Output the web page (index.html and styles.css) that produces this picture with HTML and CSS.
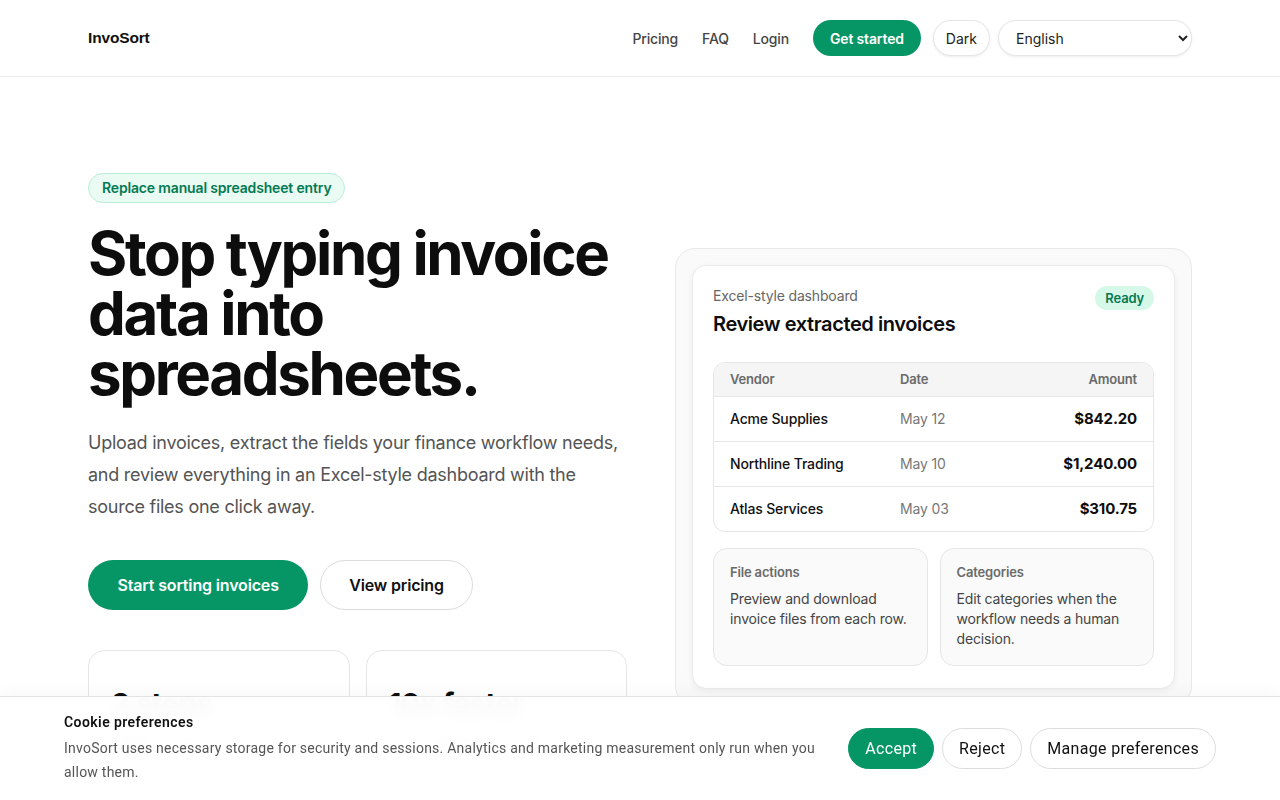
FILE: index.html
```html
<!DOCTYPE html>
<html lang="en">
<head>
    <meta charset="UTF-8">
    <meta name="viewport" content="width=device-width, initial-scale=1.0">
    <title>InvoSort</title>
    <link rel="stylesheet" href="styles.css">
</head>
<body>
    <header class="site-header">
        <div class="container header-inner">
            <a class="logo" href="#">InvoSort</a>
            <nav class="nav">
                <a href="#" class="nav-link">Pricing</a>
                <a href="#" class="nav-link">FAQ</a>
                <a href="#" class="nav-link">Login</a>
                <a href="#" class="btn-pill btn-green nav-cta">Get started</a>
                <button type="button" class="btn-pill btn-ghost theme-toggle">Dark</button>
                <select class="lang-select">
                    <option>English</option>
                    <option>Deutsch</option>
                    <option>Español</option>
                </select>
            </nav>
        </div>
    </header>

    <main class="container hero">
        <div class="hero-copy">
            <span class="eyebrow">Replace manual spreadsheet entry</span>
            <h1>Stop typing invoice data into spreadsheets.</h1>
            <p class="lead">Upload invoices, extract the fields your finance workflow needs, and review everything in an Excel-style dashboard with the source files one click away.</p>

            <div class="hero-actions">
                <a href="#" class="btn-lg btn-green">Start sorting invoices</a>
                <a href="#" class="btn-lg btn-ghost">View pricing</a>
            </div>

            <div class="stats">
                <div class="stat">
                    <strong>3 steps</strong>
                    <span>Upload, extract and review invoices in one place.</span>
                </div>
                <div class="stat">
                    <strong>10x faster</strong>
                    <span>Than copying every field into a spreadsheet.</span>
                </div>
            </div>
        </div>

        <div class="preview">
            <div class="preview-card">
                <div class="preview-head">
                    <div>
                        <p class="preview-kicker">Excel-style dashboard</p>
                        <h2>Review extracted invoices</h2>
                    </div>
                    <span class="status">Ready</span>
                </div>

                <div class="sheet">
                    <div class="sheet-row sheet-head">
                        <span>Vendor</span>
                        <span>Date</span>
                        <span class="amount">Amount</span>
                    </div>
                    <div class="sheet-row">
                        <span class="vendor">Acme Supplies</span>
                        <span class="date">May 12</span>
                        <span class="amount">$842.20</span>
                    </div>
                    <div class="sheet-row">
                        <span class="vendor">Northline Trading</span>
                        <span class="date">May 10</span>
                        <span class="amount">$1,240.00</span>
                    </div>
                    <div class="sheet-row">
                        <span class="vendor">Atlas Services</span>
                        <span class="date">May 03</span>
                        <span class="amount">$310.75</span>
                    </div>
                </div>

                <div class="features">
                    <div class="feature">
                        <h3>File actions</h3>
                        <p>Preview and download invoice files from each row.</p>
                    </div>
                    <div class="feature">
                        <h3>Categories</h3>
                        <p>Edit categories when the workflow needs a human decision.</p>
                    </div>
                </div>
            </div>
        </div>
    </main>

    <div class="cookie-bar">
        <div class="cookie-text">
            <h4>Cookie preferences</h4>
            <p>InvoSort uses necessary storage for security and sessions. Analytics and marketing measurement only run when you allow them.</p>
        </div>
        <div class="cookie-actions">
            <button type="button" class="cookie-btn cookie-accept">Accept</button>
            <button type="button" class="cookie-btn">Reject</button>
            <button type="button" class="cookie-btn">Manage preferences</button>
        </div>
    </div>
</body>
</html>
```

FILE: styles.css
```css
:root {
    --green: #069665;
    --green-soft: #e9fbf3;
    --green-text: #047a52;
    --text: #0d0d0d;
    --muted: #545454;
    --border: #e6e6e6;
    --surface: #fafafa;
}

* {
    margin: 0;
    padding: 0;
    box-sizing: border-box;
}

body {
    font-family: Inter, 'Noto Sans', sans-serif;
    background: #fff;
    color: var(--text);
    letter-spacing: -0.01em;
}

a {
    text-decoration: none;
    color: inherit;
}

button, select {
    font-family: inherit;
}

.container {
    max-width: 1104px;
    margin: 0 auto;
}

/* Header */
.site-header {
    height: 77px;
    border-bottom: 1px solid #ececec;
}

.header-inner {
    height: 76px;
    display: flex;
    align-items: center;
    justify-content: space-between;
}

.logo {
    font-family: 'Liberation Sans', Arial, sans-serif;
    font-weight: 700;
    font-size: 15.5px;
    letter-spacing: -0.01em;
    color: #111;
}

.nav {
    display: flex;
    align-items: center;
}

.nav-link {
    font-size: 14px;
    font-weight: 500;
    color: #454545;
    margin-right: 24px;
}

.btn-pill {
    height: 36px;
    border-radius: 18px;
    display: inline-flex;
    align-items: center;
    justify-content: center;
    font-size: 14px;
    font-weight: 500;
    cursor: pointer;
}

.btn-green {
    background: var(--green);
    color: #fff;
    border: none;
}

.btn-ghost {
    background: #fff;
    color: #222;
    border: 1px solid var(--border);
    box-shadow: 0 1px 3px rgba(0, 0, 0, 0.08);
}

.nav-cta {
    padding: 0 17px;
    font-weight: 600;
    margin-right: 12px;
}

.theme-toggle {
    padding: 0 12px;
    margin-right: 8px;
    font-weight: 400;
}

.lang-select {
    width: 194px;
    height: 36px;
    border-radius: 18px;
    border: 1px solid var(--border);
    background: #fff;
    box-shadow: 0 1px 3px rgba(0, 0, 0, 0.08);
    padding: 0 8px 0 13px;
    font-size: 14px;
    color: #222;
}

/* Hero */
.hero {
    display: grid;
    grid-template-columns: 539px 517px;
    gap: 48px;
    align-items: center;
    padding-top: 96px;
    padding-bottom: 80px;
}

.eyebrow {
    display: inline-block;
    padding: 5px 13px;
    border-radius: 15px;
    background: var(--green-soft);
    border: 1px solid #bdeed9;
    color: var(--green-text);
    font-size: 14px;
    font-weight: 600;
    line-height: 18px;
}

.hero h1 {
    margin-top: 20px;
    font-size: 60px;
    line-height: 60px;
    font-weight: 700;
    letter-spacing: -0.039em;
}

.lead {
    margin-top: 24px;
    font-size: 18px;
    line-height: 32px;
    color: var(--muted);
    letter-spacing: -0.014em;
}

.hero-actions {
    display: flex;
    gap: 12px;
    margin-top: 37px;
}

.btn-lg {
    height: 50px;
    border-radius: 25px;
    padding: 0 28px;
    display: inline-flex;
    align-items: center;
    font-size: 16px;
    font-weight: 600;
}

.btn-lg.btn-green {
    padding: 0 29.5px;
}

.btn-lg.btn-ghost {
    box-shadow: none;
    border-color: #dcdcdc;
    color: #111;
}

.stats {
    display: grid;
    grid-template-columns: 1fr 1fr;
    gap: 16px;
    margin-top: 40px;
}

.stat {
    border: 1px solid var(--border);
    border-radius: 16px;
    padding: 36px 22px 12px;
    display: flex;
    flex-direction: column;
    gap: 6px;
}

.stat strong {
    font-size: 30px;
    line-height: 34px;
    letter-spacing: -0.03em;
}

.stat span {
    font-size: 14px;
    line-height: 20px;
    color: var(--muted);
}

/* Dashboard preview */
.preview {
    background: var(--surface);
    border: 1px solid #e8e8e8;
    border-radius: 20px;
    padding: 16px;
}

.preview-card {
    background: #fff;
    border: 1px solid #ebebeb;
    border-radius: 14px;
    padding: 20px 20px 22px;
    box-shadow: 0 2px 6px rgba(0, 0, 0, 0.06);
}

.preview-head {
    display: flex;
    justify-content: space-between;
    align-items: flex-start;
}

.preview-kicker {
    font-size: 14px;
    line-height: 20px;
    color: #666;
}

.preview-head h2 {
    margin-top: 5px;
    font-size: 20px;
    line-height: 26px;
    font-weight: 600;
    letter-spacing: -0.02em;
}

.status {
    margin-top: 0;
    padding: 3px 10px;
    border-radius: 12px;
    background: #d6f8e8;
    color: var(--green-text);
    font-size: 13px;
    font-weight: 600;
    line-height: 18px;
}

.sheet {
    margin-top: 25px;
    border: 1px solid var(--border);
    border-radius: 12px;
    overflow: hidden;
}

.sheet-row {
    display: grid;
    grid-template-columns: 170px 1fr 1fr;
    align-items: center;
    height: 45px;
    padding: 0 16px;
    border-top: 1px solid var(--border);
    font-size: 14px;
}

.sheet-head {
    height: 33px;
    border-top: none;
    background: #f5f5f5;
    font-size: 13px;
    font-weight: 600;
    color: #6a6a6a;
}

.vendor {
    font-weight: 500;
    color: #111;
}

.date {
    color: #777;
}

.amount {
    text-align: right;
    font-weight: 700;
    font-size: 15px;
}

.sheet-head .amount {
    font-size: 13px;
    font-weight: 600;
}

.features {
    margin-top: 16px;
    display: grid;
    grid-template-columns: 1fr 1fr;
    gap: 12px;
}

.feature {
    background: var(--surface);
    border: 1px solid var(--border);
    border-radius: 14px;
    padding: 14px 16px 16px;
    min-height: 117px;
}

.feature h3 {
    font-size: 13px;
    line-height: 18px;
    font-weight: 600;
    color: #6a6a6a;
}

.feature p {
    margin-top: 8px;
    font-size: 14px;
    line-height: 20px;
    color: #444;
}

/* Cookie bar */
.cookie-bar {
    position: fixed;
    left: 0;
    right: 0;
    bottom: 0;
    display: flex;
    align-items: center;
    gap: 24px;
    padding: 15px 64px 16px;
    background: rgba(255, 255, 255, 0.97);
    backdrop-filter: blur(8px);
    border-top: 1px solid #e3e3e3;
    box-shadow: 0 -4px 16px rgba(0, 0, 0, 0.03);
    font-family: Roboto, 'Liberation Sans', sans-serif;
    letter-spacing: 0.015em;
}

.cookie-text {
    flex: 1;
}

.cookie-text h4 {
    font-size: 14px;
    line-height: 20px;
    font-weight: 600;
    color: #111;
    letter-spacing: 0.03em;
}

.cookie-text p {
    margin-top: 4px;
    font-size: 14px;
    line-height: 24px;
    color: #555;
}

.cookie-actions {
    display: flex;
    gap: 8px;
}

.cookie-btn {
    height: 41px;
    padding: 0 16px;
    border-radius: 21px;
    border: 1px solid #dcdcdc;
    background: #fff;
    color: #111;
    font-family: Roboto, 'Liberation Sans', sans-serif;
    font-size: 16px;
    letter-spacing: 0.02em;
    cursor: pointer;
}

.cookie-accept {
    background: var(--green);
    border-color: var(--green);
    color: #fff;
}
```
